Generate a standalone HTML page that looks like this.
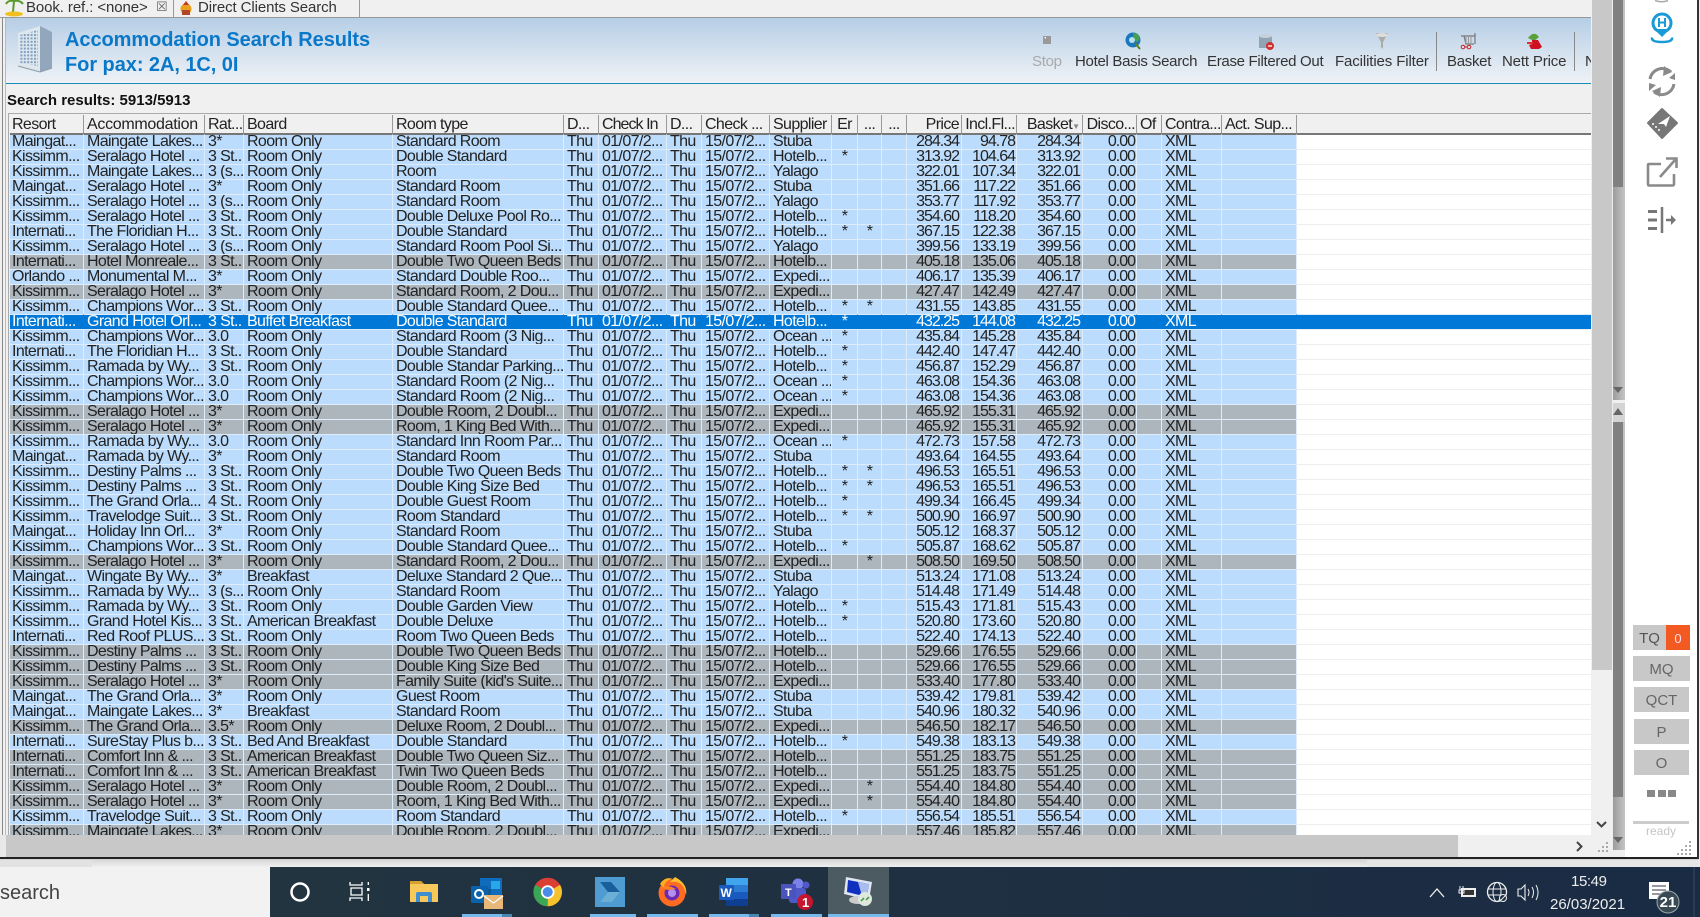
<!DOCTYPE html>
<html><head><meta charset="utf-8"><title>Accommodation Search Results</title>
<style>
html,body{margin:0;padding:0;background:#f0f0f0}
#r{position:relative;width:1700px;height:917px;overflow:hidden;background:#f0f0f0;font-family:"Liberation Sans",sans-serif}
.a{position:absolute;white-space:nowrap}
.tb{font-size:15px;letter-spacing:-.3px;color:#333;top:53px;line-height:18px}
#tw{position:absolute;left:10px;top:115px;width:1581px;height:720px;overflow:hidden;background:#fff}
table{border-collapse:separate;border-spacing:0;table-layout:fixed;width:1581px;font-size:16px;letter-spacing:-.62px;color:#222}
td{box-sizing:border-box;height:15px;line-height:14px;padding:0 0 0 3px;vertical-align:top;white-space:nowrap;overflow:hidden;background:#bbdcfd;border-top:1px solid #dfecf9;border-right:1px solid #dfecf9}
td:first-child{padding-left:2px}
tr.g td{background:#aeb6bd}
tr.s td{background:#0078d7;color:#fff;border-right-color:#0078d7}
td:nth-child(14),td:nth-child(16){text-align:right;padding:0 2px 0 0;letter-spacing:-1px}
td:nth-child(15),td:nth-child(17){text-align:right;padding:0 1px 0 0;letter-spacing:-1px}
td:nth-child(11),td:nth-child(12),td:nth-child(13){text-align:center;padding:0}
td:last-child{background:#fff;border-right:0;border-top-color:#eee}
tr.h td{height:17px;line-height:13px;padding-top:3px;background:#f0f0f0;border-top:0;border-bottom:1px solid #777;border-right:1px solid #999;letter-spacing:-.62px}
tr.h td:nth-child(2){letter-spacing:-.3px}
tr.h td:nth-child(7){letter-spacing:-.95px}
tr.h+tr td{border-top-color:#777}
tr.g td:last-child{background:#fff}
tr.s td:last-child{background:#0078d7;border-top-color:#dfecf9}
tr.h td:last-child{background:#f0f0f0;border-right:0;border-bottom:1px solid #777}
.btn{position:absolute;background:#c8c8c8;color:#666;font-size:15px;text-align:center;height:25px;line-height:27px;left:1634px;width:55px}
</style></head><body><div id="r">

<!-- tabs -->
<div class="a" style="left:0;top:0;width:1591px;height:18px;background:#f0f0f0;border-bottom:1px solid #999;box-sizing:border-box"></div>
<div class="a" style="left:173px;top:0;width:187px;height:18px;border-left:1px solid #999;border-right:1px solid #999;box-sizing:border-box"></div>
<div class="a" style="left:26px;top:-1px;font-size:15px;letter-spacing:-.1px;color:#333;line-height:18px">Book. ref.: &lt;none&gt;</div>
<div class="a" style="left:198px;top:-1px;font-size:15px;letter-spacing:-.1px;color:#333;line-height:18px">Direct Clients Search</div>
<div class="a" style="left:156px;top:-2px;font-size:13px;color:#666;line-height:18px">&#9746;</div>

<!-- title panel -->
<div class="a" style="left:5px;top:18px;width:1586px;height:66px;background:linear-gradient(#b6cee6,#eff2f6);border-bottom:1px solid #1b8db5;box-sizing:border-box"></div>
<div class="a" style="left:2px;top:18px;width:1px;height:839px;background:#888"></div>
<div class="a" style="left:5px;top:18px;width:1px;height:817px;background:#bbb"></div>
<div class="a" style="left:65px;top:28px;font-size:20px;font-weight:bold;letter-spacing:-.06px;color:#0a78c8;line-height:24px">Accommodation Search Results</div>
<div class="a" style="left:65px;top:53px;font-size:20px;font-weight:bold;letter-spacing:-.06px;color:#0a78c8;line-height:24px">For pax: 2A, 1C, 0I</div>

<div class="a tb" style="left:1032px;color:#aaa">Stop</div>
<div class="a tb" style="left:1075px">Hotel Basis Search</div>
<div class="a tb" style="left:1207px">Erase Filtered Out</div>
<div class="a tb" style="left:1335px;letter-spacing:-.12px">Facilities Filter</div>
<div class="a tb" style="left:1447px">Basket</div>
<div class="a tb" style="left:1502px;letter-spacing:-.15px">Nett Price</div>
<div class="a" style="left:1585px;top:53px;width:6px;overflow:hidden;font-size:15px;line-height:18px;color:#333">N</div>
<div class="a" style="left:1436px;top:32px;width:1px;height:39px;background:#888"></div>
<div class="a" style="left:1574px;top:32px;width:1px;height:39px;background:#888"></div>

<div class="a" style="left:7px;top:92px;font-size:15px;font-weight:bold;color:#111;line-height:18px">Search results: 5913/5913</div>

<!-- table -->
<div class="a" style="left:8px;top:113px;width:1583px;height:1px;background:#aaa"></div>
<div class="a" style="left:8px;top:113px;width:1px;height:722px;background:#aaa"></div>
<div id="tw"><table>
<colgroup><col style="width:74px"><col style="width:121px"><col style="width:39px"><col style="width:149px"><col style="width:171px"><col style="width:35px"><col style="width:68px"><col style="width:35px"><col style="width:68px"><col style="width:62px"><col style="width:26px"><col style="width:24px"><col style="width:25px"><col style="width:55px"><col style="width:55px"><col style="width:66px"><col style="width:54px"><col style="width:25px"><col style="width:60px"><col style="width:75px"><col style="width:294px"></colgroup>
<tr class="h"><td>Resort<td>Accommodation<td>Rat...<td>Board<td>Room type<td>D...<td>Check In<td>D...<td>Check ...<td>Supplier<td>Er<td>...<td>...<td>Price<td>Incl.Fl...<td>Basket<span style="font-size:8px;color:#888;letter-spacing:0">&#9660;</span><td>Disco...<td>Of<td>Contra...<td>Act. Sup...<td>
<tr><td>Maingat...<td>Maingate Lakes...<td>3*<td>Room Only<td>Standard Room<td>Thu<td>01/07/2...<td>Thu<td>15/07/2...<td>Stuba<td><td><td><td>284.34<td>94.78<td>284.34<td>0.00<td><td>XML<td><td>
<tr><td>Kissimm...<td>Seralago Hotel ...<td>3 St...<td>Room Only<td>Double Standard<td>Thu<td>01/07/2...<td>Thu<td>15/07/2...<td>Hotelb...<td>*<td><td><td>313.92<td>104.64<td>313.92<td>0.00<td><td>XML<td><td>
<tr><td>Kissimm...<td>Maingate Lakes...<td>3 (s...<td>Room Only<td>Room<td>Thu<td>01/07/2...<td>Thu<td>15/07/2...<td>Yalago<td><td><td><td>322.01<td>107.34<td>322.01<td>0.00<td><td>XML<td><td>
<tr><td>Maingat...<td>Seralago Hotel ...<td>3*<td>Room Only<td>Standard Room<td>Thu<td>01/07/2...<td>Thu<td>15/07/2...<td>Stuba<td><td><td><td>351.66<td>117.22<td>351.66<td>0.00<td><td>XML<td><td>
<tr><td>Kissimm...<td>Seralago Hotel ...<td>3 (s...<td>Room Only<td>Standard Room<td>Thu<td>01/07/2...<td>Thu<td>15/07/2...<td>Yalago<td><td><td><td>353.77<td>117.92<td>353.77<td>0.00<td><td>XML<td><td>
<tr><td>Kissimm...<td>Seralago Hotel ...<td>3 St...<td>Room Only<td>Double Deluxe Pool Ro...<td>Thu<td>01/07/2...<td>Thu<td>15/07/2...<td>Hotelb...<td>*<td><td><td>354.60<td>118.20<td>354.60<td>0.00<td><td>XML<td><td>
<tr><td>Internati...<td>The Floridian H...<td>3 St...<td>Room Only<td>Double Standard<td>Thu<td>01/07/2...<td>Thu<td>15/07/2...<td>Hotelb...<td>*<td>*<td><td>367.15<td>122.38<td>367.15<td>0.00<td><td>XML<td><td>
<tr><td>Kissimm...<td>Seralago Hotel ...<td>3 (s...<td>Room Only<td>Standard Room Pool Si...<td>Thu<td>01/07/2...<td>Thu<td>15/07/2...<td>Yalago<td><td><td><td>399.56<td>133.19<td>399.56<td>0.00<td><td>XML<td><td>
<tr class="g"><td>Internati...<td>Hotel Monreale...<td>3 St...<td>Room Only<td>Double Two Queen Beds<td>Thu<td>01/07/2...<td>Thu<td>15/07/2...<td>Hotelb...<td><td><td><td>405.18<td>135.06<td>405.18<td>0.00<td><td>XML<td><td>
<tr><td>Orlando ...<td>Monumental M...<td>3*<td>Room Only<td>Standard Double Roo...<td>Thu<td>01/07/2...<td>Thu<td>15/07/2...<td>Expedi...<td><td><td><td>406.17<td>135.39<td>406.17<td>0.00<td><td>XML<td><td>
<tr class="g"><td>Kissimm...<td>Seralago Hotel ...<td>3*<td>Room Only<td>Standard Room, 2 Dou...<td>Thu<td>01/07/2...<td>Thu<td>15/07/2...<td>Expedi...<td><td><td><td>427.47<td>142.49<td>427.47<td>0.00<td><td>XML<td><td>
<tr><td>Kissimm...<td>Champions Wor...<td>3 St...<td>Room Only<td>Double Standard Quee...<td>Thu<td>01/07/2...<td>Thu<td>15/07/2...<td>Hotelb...<td>*<td>*<td><td>431.55<td>143.85<td>431.55<td>0.00<td><td>XML<td><td>
<tr class="s"><td>Internati...<td>Grand Hotel Orl...<td>3 St...<td>Buffet Breakfast<td>Double Standard<td>Thu<td>01/07/2...<td>Thu<td>15/07/2...<td>Hotelb...<td>*<td><td><td>432.25<td>144.08<td>432.25<td>0.00<td><td>XML<td><td>
<tr><td>Kissimm...<td>Champions Wor...<td>3.0<td>Room Only<td>Standard Room (3 Nig...<td>Thu<td>01/07/2...<td>Thu<td>15/07/2...<td>Ocean ...<td>*<td><td><td>435.84<td>145.28<td>435.84<td>0.00<td><td>XML<td><td>
<tr><td>Internati...<td>The Floridian H...<td>3 St...<td>Room Only<td>Double Standard<td>Thu<td>01/07/2...<td>Thu<td>15/07/2...<td>Hotelb...<td>*<td><td><td>442.40<td>147.47<td>442.40<td>0.00<td><td>XML<td><td>
<tr><td>Kissimm...<td>Ramada by Wy...<td>3 St...<td>Room Only<td>Double Standar Parking...<td>Thu<td>01/07/2...<td>Thu<td>15/07/2...<td>Hotelb...<td>*<td><td><td>456.87<td>152.29<td>456.87<td>0.00<td><td>XML<td><td>
<tr><td>Kissimm...<td>Champions Wor...<td>3.0<td>Room Only<td>Standard Room (2 Nig...<td>Thu<td>01/07/2...<td>Thu<td>15/07/2...<td>Ocean ...<td>*<td><td><td>463.08<td>154.36<td>463.08<td>0.00<td><td>XML<td><td>
<tr><td>Kissimm...<td>Champions Wor...<td>3.0<td>Room Only<td>Standard Room (2 Nig...<td>Thu<td>01/07/2...<td>Thu<td>15/07/2...<td>Ocean ...<td>*<td><td><td>463.08<td>154.36<td>463.08<td>0.00<td><td>XML<td><td>
<tr class="g"><td>Kissimm...<td>Seralago Hotel ...<td>3*<td>Room Only<td>Double Room, 2 Doubl...<td>Thu<td>01/07/2...<td>Thu<td>15/07/2...<td>Expedi...<td><td><td><td>465.92<td>155.31<td>465.92<td>0.00<td><td>XML<td><td>
<tr class="g"><td>Kissimm...<td>Seralago Hotel ...<td>3*<td>Room Only<td>Room, 1 King Bed With...<td>Thu<td>01/07/2...<td>Thu<td>15/07/2...<td>Expedi...<td><td><td><td>465.92<td>155.31<td>465.92<td>0.00<td><td>XML<td><td>
<tr><td>Kissimm...<td>Ramada by Wy...<td>3.0<td>Room Only<td>Standard Inn Room Par...<td>Thu<td>01/07/2...<td>Thu<td>15/07/2...<td>Ocean ...<td>*<td><td><td>472.73<td>157.58<td>472.73<td>0.00<td><td>XML<td><td>
<tr><td>Maingat...<td>Ramada by Wy...<td>3*<td>Room Only<td>Standard Room<td>Thu<td>01/07/2...<td>Thu<td>15/07/2...<td>Stuba<td><td><td><td>493.64<td>164.55<td>493.64<td>0.00<td><td>XML<td><td>
<tr><td>Kissimm...<td>Destiny Palms ...<td>3 St...<td>Room Only<td>Double Two Queen Beds<td>Thu<td>01/07/2...<td>Thu<td>15/07/2...<td>Hotelb...<td>*<td>*<td><td>496.53<td>165.51<td>496.53<td>0.00<td><td>XML<td><td>
<tr><td>Kissimm...<td>Destiny Palms ...<td>3 St...<td>Room Only<td>Double King Size Bed<td>Thu<td>01/07/2...<td>Thu<td>15/07/2...<td>Hotelb...<td>*<td>*<td><td>496.53<td>165.51<td>496.53<td>0.00<td><td>XML<td><td>
<tr><td>Kissimm...<td>The Grand Orla...<td>4 St...<td>Room Only<td>Double Guest Room<td>Thu<td>01/07/2...<td>Thu<td>15/07/2...<td>Hotelb...<td>*<td><td><td>499.34<td>166.45<td>499.34<td>0.00<td><td>XML<td><td>
<tr><td>Kissimm...<td>Travelodge Suit...<td>3 St...<td>Room Only<td>Room Standard<td>Thu<td>01/07/2...<td>Thu<td>15/07/2...<td>Hotelb...<td>*<td>*<td><td>500.90<td>166.97<td>500.90<td>0.00<td><td>XML<td><td>
<tr><td>Maingat...<td>Holiday Inn Orl...<td>3*<td>Room Only<td>Standard Room<td>Thu<td>01/07/2...<td>Thu<td>15/07/2...<td>Stuba<td><td><td><td>505.12<td>168.37<td>505.12<td>0.00<td><td>XML<td><td>
<tr><td>Kissimm...<td>Champions Wor...<td>3 St...<td>Room Only<td>Double Standard Quee...<td>Thu<td>01/07/2...<td>Thu<td>15/07/2...<td>Hotelb...<td>*<td><td><td>505.87<td>168.62<td>505.87<td>0.00<td><td>XML<td><td>
<tr class="g"><td>Kissimm...<td>Seralago Hotel ...<td>3*<td>Room Only<td>Standard Room, 2 Dou...<td>Thu<td>01/07/2...<td>Thu<td>15/07/2...<td>Expedi...<td><td>*<td><td>508.50<td>169.50<td>508.50<td>0.00<td><td>XML<td><td>
<tr><td>Maingat...<td>Wingate By Wy...<td>3*<td>Breakfast<td>Deluxe Standard 2 Que...<td>Thu<td>01/07/2...<td>Thu<td>15/07/2...<td>Stuba<td><td><td><td>513.24<td>171.08<td>513.24<td>0.00<td><td>XML<td><td>
<tr><td>Kissimm...<td>Ramada by Wy...<td>3 (s...<td>Room Only<td>Standard Room<td>Thu<td>01/07/2...<td>Thu<td>15/07/2...<td>Yalago<td><td><td><td>514.48<td>171.49<td>514.48<td>0.00<td><td>XML<td><td>
<tr><td>Kissimm...<td>Ramada by Wy...<td>3 St...<td>Room Only<td>Double Garden View<td>Thu<td>01/07/2...<td>Thu<td>15/07/2...<td>Hotelb...<td>*<td><td><td>515.43<td>171.81<td>515.43<td>0.00<td><td>XML<td><td>
<tr><td>Kissimm...<td>Grand Hotel Kis...<td>3 St...<td>American Breakfast<td>Double Deluxe<td>Thu<td>01/07/2...<td>Thu<td>15/07/2...<td>Hotelb...<td>*<td><td><td>520.80<td>173.60<td>520.80<td>0.00<td><td>XML<td><td>
<tr><td>Internati...<td>Red Roof PLUS...<td>3 St...<td>Room Only<td>Room Two Queen Beds<td>Thu<td>01/07/2...<td>Thu<td>15/07/2...<td>Hotelb...<td><td><td><td>522.40<td>174.13<td>522.40<td>0.00<td><td>XML<td><td>
<tr class="g"><td>Kissimm...<td>Destiny Palms ...<td>3 St...<td>Room Only<td>Double Two Queen Beds<td>Thu<td>01/07/2...<td>Thu<td>15/07/2...<td>Hotelb...<td><td><td><td>529.66<td>176.55<td>529.66<td>0.00<td><td>XML<td><td>
<tr class="g"><td>Kissimm...<td>Destiny Palms ...<td>3 St...<td>Room Only<td>Double King Size Bed<td>Thu<td>01/07/2...<td>Thu<td>15/07/2...<td>Hotelb...<td><td><td><td>529.66<td>176.55<td>529.66<td>0.00<td><td>XML<td><td>
<tr class="g"><td>Kissimm...<td>Seralago Hotel ...<td>3*<td>Room Only<td>Family Suite (kid's Suite...<td>Thu<td>01/07/2...<td>Thu<td>15/07/2...<td>Expedi...<td><td><td><td>533.40<td>177.80<td>533.40<td>0.00<td><td>XML<td><td>
<tr><td>Maingat...<td>The Grand Orla...<td>3*<td>Room Only<td>Guest Room<td>Thu<td>01/07/2...<td>Thu<td>15/07/2...<td>Stuba<td><td><td><td>539.42<td>179.81<td>539.42<td>0.00<td><td>XML<td><td>
<tr><td>Maingat...<td>Maingate Lakes...<td>3*<td>Breakfast<td>Standard Room<td>Thu<td>01/07/2...<td>Thu<td>15/07/2...<td>Stuba<td><td><td><td>540.96<td>180.32<td>540.96<td>0.00<td><td>XML<td><td>
<tr class="g"><td>Kissimm...<td>The Grand Orla...<td>3.5*<td>Room Only<td>Deluxe Room, 2 Doubl...<td>Thu<td>01/07/2...<td>Thu<td>15/07/2...<td>Expedi...<td><td><td><td>546.50<td>182.17<td>546.50<td>0.00<td><td>XML<td><td>
<tr><td>Internati...<td>SureStay Plus b...<td>3 St...<td>Bed And Breakfast<td>Double Standard<td>Thu<td>01/07/2...<td>Thu<td>15/07/2...<td>Hotelb...<td>*<td><td><td>549.38<td>183.13<td>549.38<td>0.00<td><td>XML<td><td>
<tr class="g"><td>Internati...<td>Comfort Inn &amp; ...<td>3 St...<td>American Breakfast<td>Double Two Queen Siz...<td>Thu<td>01/07/2...<td>Thu<td>15/07/2...<td>Hotelb...<td><td><td><td>551.25<td>183.75<td>551.25<td>0.00<td><td>XML<td><td>
<tr class="g"><td>Internati...<td>Comfort Inn &amp; ...<td>3 St...<td>American Breakfast<td>Twin Two Queen Beds<td>Thu<td>01/07/2...<td>Thu<td>15/07/2...<td>Hotelb...<td><td><td><td>551.25<td>183.75<td>551.25<td>0.00<td><td>XML<td><td>
<tr class="g"><td>Kissimm...<td>Seralago Hotel ...<td>3*<td>Room Only<td>Double Room, 2 Doubl...<td>Thu<td>01/07/2...<td>Thu<td>15/07/2...<td>Expedi...<td><td>*<td><td>554.40<td>184.80<td>554.40<td>0.00<td><td>XML<td><td>
<tr class="g"><td>Kissimm...<td>Seralago Hotel ...<td>3*<td>Room Only<td>Room, 1 King Bed With...<td>Thu<td>01/07/2...<td>Thu<td>15/07/2...<td>Expedi...<td><td>*<td><td>554.40<td>184.80<td>554.40<td>0.00<td><td>XML<td><td>
<tr><td>Kissimm...<td>Travelodge Suit...<td>3 St...<td>Room Only<td>Room Standard<td>Thu<td>01/07/2...<td>Thu<td>15/07/2...<td>Hotelb...<td>*<td><td><td>556.54<td>185.51<td>556.54<td>0.00<td><td>XML<td><td>
<tr class="g"><td>Kissimm...<td>Maingate Lakes...<td>3*<td>Room Only<td>Double Room, 2 Doubl...<td>Thu<td>01/07/2...<td>Thu<td>15/07/2...<td>Expedi...<td><td><td><td>557.46<td>185.82<td>557.46<td>0.00<td><td>XML<td><td>
</table></div>

<!-- scrollbars -->
<div class="a" style="left:1592px;top:0;width:20px;height:670px;background:#c8c8c8"></div>
<div class="a" style="left:1592px;top:670px;width:20px;height:187px;background:#f0f0f0"></div>
<div class="a" style="left:6px;top:835px;width:1452px;height:22px;background:#c8c8c8"></div>
<div class="a" style="left:1458px;top:835px;width:154px;height:22px;background:#f0f0f0"></div>
<div class="a" style="left:0;top:835px;width:6px;height:22px;background:#e8e8e8"></div>
<div class="a" style="left:1612px;top:0;width:1px;height:850px;background:#eee"></div>
<div class="a" style="left:1613px;top:0;width:12px;height:850px;background:linear-gradient(90deg,#9c9c9c,#c4c4c4)"></div>
<div class="a" style="left:1625px;top:0;width:72px;height:857px;background:#fff"></div>
<div class="a" style="left:1613px;top:0;width:10px;height:187px;background:#808080"></div>
<div class="a" style="left:1613px;top:400px;width:12px;height:3px;background:#f0f0f0"></div>
<div class="a" style="left:1613px;top:403px;width:12px;height:19px;background:#d4d4d4"></div>
<div class="a" style="left:1613px;top:422px;width:10px;height:375px;background:#808080"></div>
<div class="a" style="left:0;top:857px;width:1698px;height:2px;background:#222"></div>
<div class="a" style="left:1697px;top:0;width:2px;height:859px;background:#333"></div>
<div class="a" style="left:1699px;top:0;width:1px;height:867px;background:#eee"></div>
<div class="a" style="left:0;top:859px;width:1699px;height:8px;background:linear-gradient(#d4d4d4,#f0f0f0)"></div>
<div class="a" style="left:0;top:860px;width:92px;height:7px;background:#e2e2e2"></div>
<div class="a" style="left:1367px;top:860px;width:332px;height:7px;background:#e6e6e6"></div>

<!-- sidebar buttons -->
<div class="a" style="left:1633px;top:625px;width:33px;height:25px;line-height:27px;background:#c8c8c8;color:#555;font-size:15px;text-align:center">TQ</div>
<div class="a" style="left:1666px;top:625px;width:24px;height:25px;line-height:27px;background:#f35a21;color:#fde;font-size:13px;text-align:center">0</div>
<div class="btn" style="left:1633px;width:57px;top:656px">MQ</div>
<div class="btn" style="top:687px">QCT</div>
<div class="btn" style="top:719px">P</div>
<div class="btn" style="top:750px">O</div>
<div class="a" style="left:1633px;top:821px;width:56px;height:3px;background:#ccc"></div>
<div class="a" style="left:1633px;top:824px;width:56px;text-align:center;font-size:12px;color:#c4c4c4;line-height:15px">ready</div>

<!-- taskbar -->
<div class="a" style="left:0;top:867px;width:270px;height:50px;background:#f2f2f2"></div>
<div class="a" style="left:0;top:881px;font-size:20px;color:#444;line-height:24px">search</div>
<div class="a" style="left:270px;top:867px;width:1430px;height:50px;background:linear-gradient(90deg,#22343f,#1a2b44)"></div>
<div class="a" style="left:828px;top:867px;width:61px;height:50px;background:#4c5a62"></div>
<div class="a" style="left:1571px;top:873px;font-size:15px;letter-spacing:-.4px;color:#eee;line-height:18px">15:49</div>
<div class="a" style="left:1550px;top:896px;font-size:15px;color:#eee;line-height:18px">26/03/2021</div>
<div class="a" style="left:1658px;top:894px;width:20px;text-align:center;font-size:15px;font-weight:bold;color:#fff;line-height:17px;z-index:3">21</div>

<svg class="a" style="left:0;top:0;z-index:2" width="1700" height="917" viewBox="0 0 1700 917" fill="none">
<defs><pattern id="w" width="3.4" height="3.4" patternUnits="userSpaceOnUse"><rect width="2" height="2" fill="#7f9fc0"/></pattern></defs>
<!-- tab icons -->
<path d="M14 1 Q8 0 6 4 M14 1 Q20 0 23 4 M14 1 L13 12" stroke="#5a9a2a" stroke-width="2"/>
<ellipse cx="14" cy="14" rx="9" ry="2.5" fill="#f0c020"/>
<circle cx="186" cy="9" r="5.5" fill="#e8a020"/><path d="M186 1l3 4h-6z" fill="#c83020"/><rect x="182" y="10" width="8" height="5" fill="#b04828"/>

<!-- hotel -->
<path d="M18 33 L40 26 L40 72 L18 66Z" fill="#dfe7ee"/><path d="M40 26 L52 32 L52 68 L40 72Z" fill="#92a7bb"/>
<path d="M20 35 L38 30 L38 66 L20 63Z" fill="url(#w)"/>
<path d="M18 66 L40 72 L52 68" stroke="#8a9aa8" stroke-width="1"/>

<!-- toolbar icons -->
<rect x="1043" y="36" width="8" height="8" fill="#999"/><path d="M1044 37h2v2z" fill="#fff"/>
<circle cx="1133" cy="40" r="7.5" fill="#1a78c0"/><path d="M1133 33l5 1 2 5-3 3-3-3z" fill="#48a050"/><circle cx="1132" cy="40" r="3" fill="#b8e0e8"/><path d="M1135 43l5 6" stroke="#5a8020" stroke-width="2"/>
<path d="M1259 36h13v12h-13z" fill="#90a4b4"/><ellipse cx="1265.500" cy="36" rx="6.500" ry="2" fill="#c4d0da"/><circle cx="1270" cy="46" r="4" fill="#d03030"/><path d="M1268 46h4" stroke="#fff" stroke-width="1.300"/>
<path d="M1376 33 H1388 L1383 42 V49 L1381 47 V42Z" fill="#aaa"/><ellipse cx="1382" cy="35" rx="6" ry="2" fill="#ddd"/>
<path d="M1461 36 H1475 M1475 33 V44 M1464 36 L1466 44 H1474" stroke="#777" stroke-width="1.200"/><path d="M1466 37v6M1468.500 37v6M1471 37v6" stroke="#999"/><circle cx="1463" cy="47" r="1.800" stroke="#c82020"/><circle cx="1469" cy="47" r="1.800" stroke="#c82020"/><path d="M1464.500 47h3" stroke="#c82020"/>
<path d="M1528 38 Q1534 30 1539 37 L1534 41Z" fill="#58a038"/><path d="M1532 40h6l4 7-3 2h-8l-2-4 3-1z" fill="#d01020"/><path d="M1527 42h6v2h-6z" fill="#e03030"/>

<!-- sidebar icons -->
<path d="M1655 0.500 Q1662 3 1668 0.500" stroke="#aaa" stroke-width="1.500"/>
<circle cx="1662" cy="23" r="9" stroke="#1a9ad6" stroke-width="3"/><path d="M1654 29 L1662 37 L1670 29" fill="#1a9ad6"/>
<path d="M1659 18v9M1665 18v9M1659 22.500h6" stroke="#1a9ad6" stroke-width="2"/>
<path d="M1652 37.500 Q1651 42 1662 42 Q1673 42 1672 37.500" stroke="#1a9ad6" stroke-width="2.500"/>
<path d="M1650 79 A12.500 12.500 0 0 1 1671 72 M1674 84 A12.500 12.500 0 0 1 1654 92" stroke="#8a8a8a" stroke-width="3"/>
<path d="M1664 66 L1672 72 L1663 76Z M1660 97 L1652 91 L1661 87Z M1649 83 L1656 85 L1649 91Z M1675 80 L1669 78 L1675 73Z" fill="#8a8a8a"/>
<path d="M1662 109 L1677 123 L1662 138 L1648 123Z" fill="#777" stroke="#777" stroke-width="2" stroke-linejoin="round"/>
<path d="M1658 124 L1670 116 L1666 127 L1664 124 Z" fill="#fff"/><circle cx="1653" cy="124" r="1" fill="#fff"/><circle cx="1656" cy="127" r="1" fill="#fff"/><circle cx="1659" cy="130" r="1" fill="#fff"/>
<path d="M1661 164 H1649 Q1648 164 1648 165 V184 Q1648 185.500 1649 185.500 H1672 Q1674 185.500 1674 184 V174" stroke="#8a8a8a" stroke-width="2.600"/>
<path d="M1660 177 L1675 160 M1666 158.500 H1676.500 V168" stroke="#8a8a8a" stroke-width="2.600"/>
<path d="M1648 211.500h9M1648 220h9M1648 228.500h9" stroke="#777" stroke-width="3"/><path d="M1662 207v26" stroke="#777" stroke-width="2.500"/><path d="M1666 220h6" stroke="#777" stroke-width="2.500"/><path d="M1671 215l5 5-5 5z" fill="#777"/>
<!-- outer scrollbar triangles -->
<path d="M1613 387h10l-5 6z" fill="#666"/><path d="M1613 415h10l-5-7z" fill="#666"/><path d="M1613 837h10l-5 6z" fill="#666"/>
<!-- inner scroll arrows -->
<path d="M1597 822l4.500 4.500 4.500-4.500" stroke="#444" stroke-width="2"/><path d="M1577 842l4.500 4.500-4.500 4.500" stroke="#444" stroke-width="2"/>
<g fill="#aaa"><rect x="1606" y="842" width="2" height="2"/><rect x="1606" y="846" width="2" height="2"/><rect x="1602" y="846" width="2" height="2"/><rect x="1606" y="850" width="2" height="2"/><rect x="1602" y="850" width="2" height="2"/><rect x="1598" y="850" width="2" height="2"/>
<rect x="1689" y="841" width="2" height="2"/><rect x="1689" y="845" width="2" height="2"/><rect x="1685" y="845" width="2" height="2"/><rect x="1689" y="849" width="2" height="2"/><rect x="1685" y="849" width="2" height="2"/><rect x="1681" y="849" width="2" height="2"/><rect x="1689" y="853" width="2" height="2"/><rect x="1685" y="853" width="2" height="2"/><rect x="1681" y="853" width="2" height="2"/><rect x="1677" y="853" width="2" height="2"/></g>
<rect x="1647" y="790" width="8" height="7" fill="#888"/><rect x="1658" y="790" width="8" height="7" fill="#888"/><rect x="1668" y="790" width="8" height="7" fill="#888"/>

<!-- task underlines -->
<g fill="#76b9ed"><rect x="462" y="914" width="40" height="3"/><rect x="590" y="914" width="46" height="3"/><rect x="647" y="914" width="51" height="3"/><rect x="709" y="914" width="40" height="3"/><rect x="771" y="914" width="51" height="3"/><rect x="828" y="914" width="61" height="3"/></g>
<rect x="502" y="914" width="10" height="3" fill="#4a86b0"/><rect x="749" y="914" width="10" height="3" fill="#4a86b0"/>
<!-- cortana, task view -->
<circle cx="300" cy="892" r="8.500" stroke="#fff" stroke-width="2.500"/>
<path d="M350 882v3h12v-3M350 901v-3h12v3M351 888h11v7h-11z" stroke="#fff" stroke-width="1.300"/><rect x="367" y="888" width="2.500" height="3" fill="#fff"/><path d="M368.300 882v3M368.300 894v7" stroke="#fff" stroke-width="1.300"/>
<!-- explorer -->
<path d="M410 881 H421 L424 884 H438 V902 H410Z" fill="#f7c95a"/><path d="M410 881 H421 L424 884 H410Z" fill="#d8a030"/>
<path d="M416 902 V894 Q416 892 418 892 H430 Q432 892 432 894 V902 H428 V896 H420 V902Z" fill="#3f8fd0"/>
<!-- outlook -->
<rect x="480" y="878" width="22" height="24" fill="#0f6cbd"/><rect x="491" y="881" width="9" height="8" fill="#28a8ea"/><rect x="482" y="889" width="9" height="8" fill="#0a5a9c"/>
<rect x="471" y="886" width="17" height="17" rx="1" fill="#0a62ac"/><circle cx="479" cy="894" r="4" stroke="#fff" stroke-width="2"/>
<rect x="484" y="895" width="19" height="14" fill="#e7b877"/><path d="M484 896 L493.500 903 L503 896" stroke="#fff" stroke-width="1.200"/>
<!-- chrome -->
<circle cx="547.700" cy="892" r="10" stroke="#d93f35" stroke-width="8.500"/>
<circle cx="547.700" cy="892" r="10" stroke="#f6c22c" stroke-width="8.500" stroke-dasharray="20.950 62.830" transform="rotate(-30 547.700 892)"/>
<circle cx="547.700" cy="892" r="10" stroke="#3aa757" stroke-width="8.500" stroke-dasharray="20.950 62.830" transform="rotate(90 547.700 892)"/>
<circle cx="547.700" cy="892" r="6.800" fill="#fff"/><circle cx="547.700" cy="892" r="5" fill="#4a8de8"/>
<!-- shape app -->
<rect x="595" y="877" width="30" height="30" fill="#4f9cd2"/><path d="M600 882 H611 L620 892 L612 902 H600 L608 892Z" fill="#185f9c"/><path d="M600 902 H612 L620 892 H608Z" fill="#8ed0f0" opacity=".7"/>
<!-- firefox -->
<circle cx="672" cy="893" r="13.500" fill="#ff6b20"/><path d="M675 877 Q688 884 686 895 Q684 880 670 882Z" fill="#ffbf30"/><path d="M660 884 Q665 876 673 879 Q664 880 664 888Z" fill="#ffb020"/><circle cx="672" cy="893" r="7.500" fill="#6a2bb0"/><circle cx="672" cy="893" r="4" fill="#b590ee"/><path d="M660 888 Q668 884 676 889 L668 890 Z" fill="#ff8020"/>
<!-- word -->
<rect x="726" y="878" width="22" height="28" rx="1" fill="#2b7cd3"/><rect x="726" y="878" width="22" height="7" fill="#41a5ee"/><rect x="726" y="892" width="22" height="7" fill="#185abd"/><rect x="726" y="899" width="22" height="7" fill="#103f91"/>
<rect x="719" y="885" width="15" height="15" rx="1" fill="#185abd"/><text x="720.500" y="897" font-family="Liberation Sans" font-size="12" font-weight="bold" fill="#fff">W</text>
<!-- teams -->
<circle cx="798" cy="884" r="5.500" fill="#7b83eb"/><circle cx="806" cy="885" r="3.500" fill="#5059c9"/><rect x="789" y="888" width="17" height="15" rx="3" fill="#5059c9"/>
<rect x="781" y="884" width="15" height="15" rx="1" fill="#4b53bc"/><text x="785" y="896" font-family="Liberation Sans" font-size="11" font-weight="bold" fill="#fff">T</text>
<circle cx="805" cy="902" r="8" fill="#c4162c"/><text x="802" y="907" font-family="Liberation Sans" font-size="13" font-weight="bold" fill="#fff">1</text>
<!-- rdp -->
<path d="M846 877 L872 882 L869 900 L844 894Z" fill="#dfe6f2"/><path d="M848 880 L869 884 L867 897 L847 892Z" fill="#1030c0"/><path d="M858 882 L869 884 L867 897 L862 896Z" fill="#a8bcf0"/>
<ellipse cx="858" cy="900" rx="9" ry="4" fill="#ccc"/><circle cx="865" cy="899" r="7" fill="#dfe8df"/><path d="M861 901l3-3M869 897l-3 3" stroke="#3a9a3a" stroke-width="1.500"/>
<!-- tray -->
<path d="M1430 897 L1437 889 L1444 897" stroke="#eee" stroke-width="1.300"/>
<rect x="1461" y="888" width="15" height="9" fill="#eee"/><rect x="1463" y="890" width="11" height="5" fill="#333"/><path d="M1460 886v4M1463 886v4M1459 890h5v3h-5z" stroke="#eee"/>
<circle cx="1497" cy="892" r="9.500" stroke="#eee" stroke-width="1.300"/><ellipse cx="1497" cy="892" rx="4" ry="9.500" stroke="#eee"/><path d="M1488 889h18M1488 895h18" stroke="#eee"/><circle cx="1503" cy="898" r="3.500" fill="#1c2d3f" stroke="#eee"/><path d="M1501 900l4-4" stroke="#eee"/>
<path d="M1518 889h3l4-4v15l-4-4h-3z" stroke="#eee" stroke-width="1.100"/><path d="M1528 889q2 3.500 0 7M1532 887q3 5.500 0 11M1536 885q4 7.500 0 15" stroke="#eee"/>
<rect x="1649" y="882" width="20" height="17" fill="#fff"/><path d="M1652 886h14M1652 890h14M1652 894h14" stroke="#334" stroke-width="1"/>
<circle cx="1668" cy="902" r="11" fill="#3a4a55" stroke="#9aa" stroke-width="1"/>
<path d="M1694 867v50" stroke="#3a4a5c"/>
</svg>
</div></body></html>
